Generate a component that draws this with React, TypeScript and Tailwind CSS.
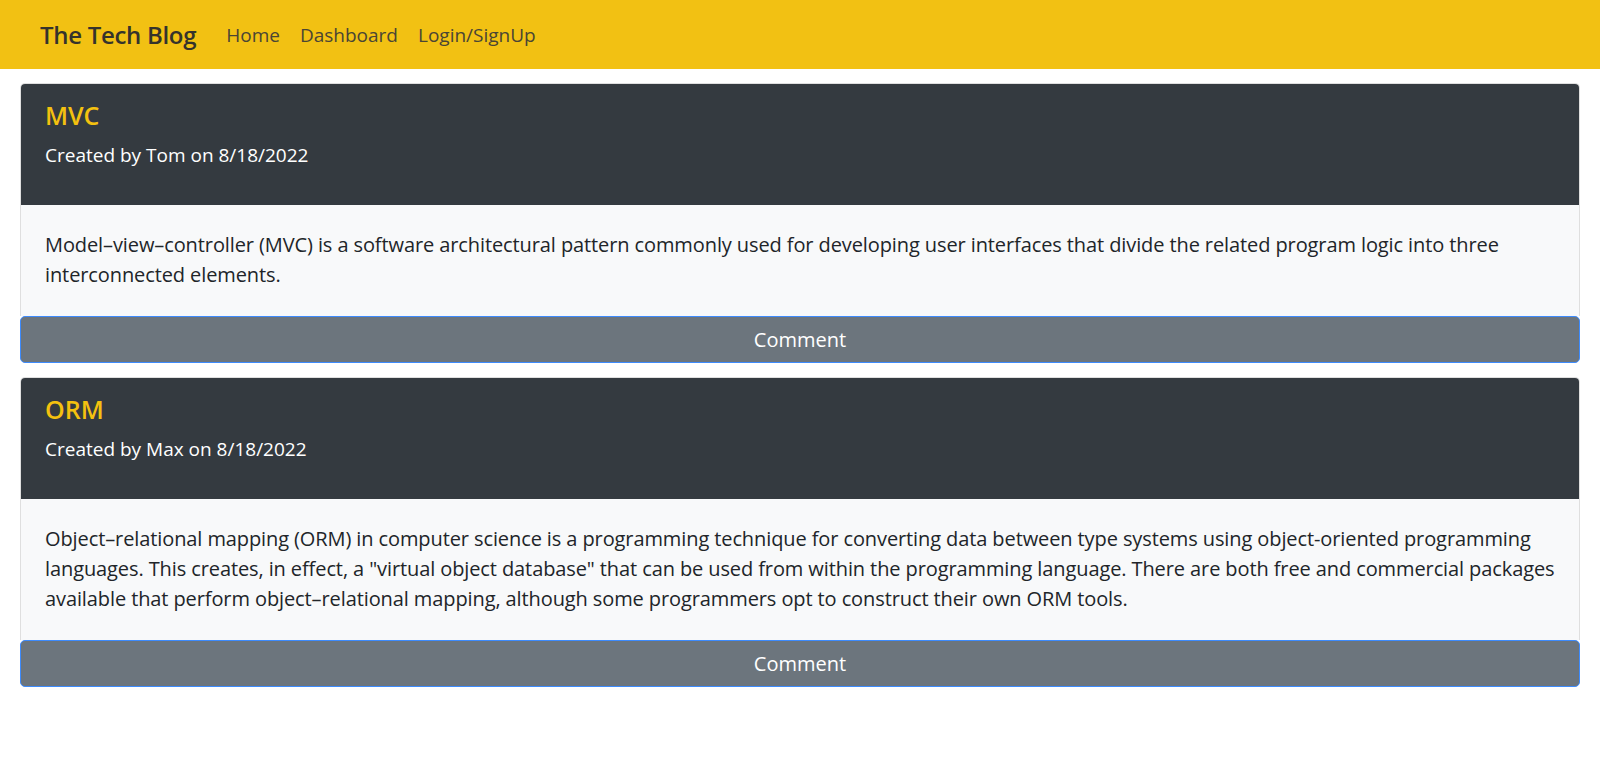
import React from "react";

interface Post {
  id: number;
  title: string;
  author: string;
  date: string;
  body: string;
}

const posts: Post[] = [
  {
    id: 1,
    title: "MVC",
    author: "Tom",
    date: "8/18/2022",
    body: "Model–view–controller (MVC) is a software architectural pattern commonly used for developing user interfaces that divide the related program logic into three interconnected elements.",
  },
  {
    id: 2,
    title: "ORM",
    author: "Max",
    date: "8/18/2022",
    body: 'Object–relational mapping (ORM) in computer science is a programming technique for converting data between type systems using object-oriented programming languages. This creates, in effect, a "virtual object database" that can be used from within the programming language. There are both free and commercial packages available that perform object–relational mapping, although some programmers opt to construct their own ORM tools.',
  },
];

function Navbar() {
  return (
    <nav className="h-[69px] bg-[#f2c113] flex items-center pl-[40px]">
      <a className="text-[24px] leading-[36px] font-semibold tracking-[-0.3px] text-[#35332c] mr-[30px]">
        The Tech Blog
      </a>
      <div className="flex items-center gap-[20px] text-[19px] leading-[30px] text-[#4a4535]">
        <a>Home</a>
        <a>Dashboard</a>
        <a>Login/SignUp</a>
      </div>
    </nav>
  );
}

function PostCard({ post }: { post: Post }) {
  return (
    <div className="mt-[14px]">
      <div className="rounded-t-[5px] border border-b-0 border-[#dfdfdf] overflow-hidden">
        <div className="bg-[#343a40] h-[121px] px-[24px] pt-[16px]">
          <h5 className="text-[25px] leading-[30px] font-semibold text-[#f4c10f]">
            {post.title}
          </h5>
          <p className="mt-[10px] text-[19px] leading-[30px] text-white">
            Created by {post.author} on {post.date}
          </p>
        </div>
        <div className="bg-[#f8f9fa] px-[24px] pt-[25px] pb-[26px]">
          <p className="text-[20px] leading-[30px] tracking-[-0.1px] text-[#212529]">
            {post.body}
          </p>
        </div>
      </div>
      <button className="w-full h-[47px] pt-[1px] rounded-[5px] border border-[#3d8bfd] bg-[#6c757d] text-white text-[20px] leading-[30px]">
        Comment
      </button>
    </div>
  );
}

export default function App() {
  return (
    <div className="min-h-screen bg-white font-['Open_Sans',sans-serif]">
      <Navbar />
      <main className="px-[20px]">
        {posts.map((post) => (
          <PostCard key={post.id} post={post} />
        ))}
      </main>
    </div>
  );
}
